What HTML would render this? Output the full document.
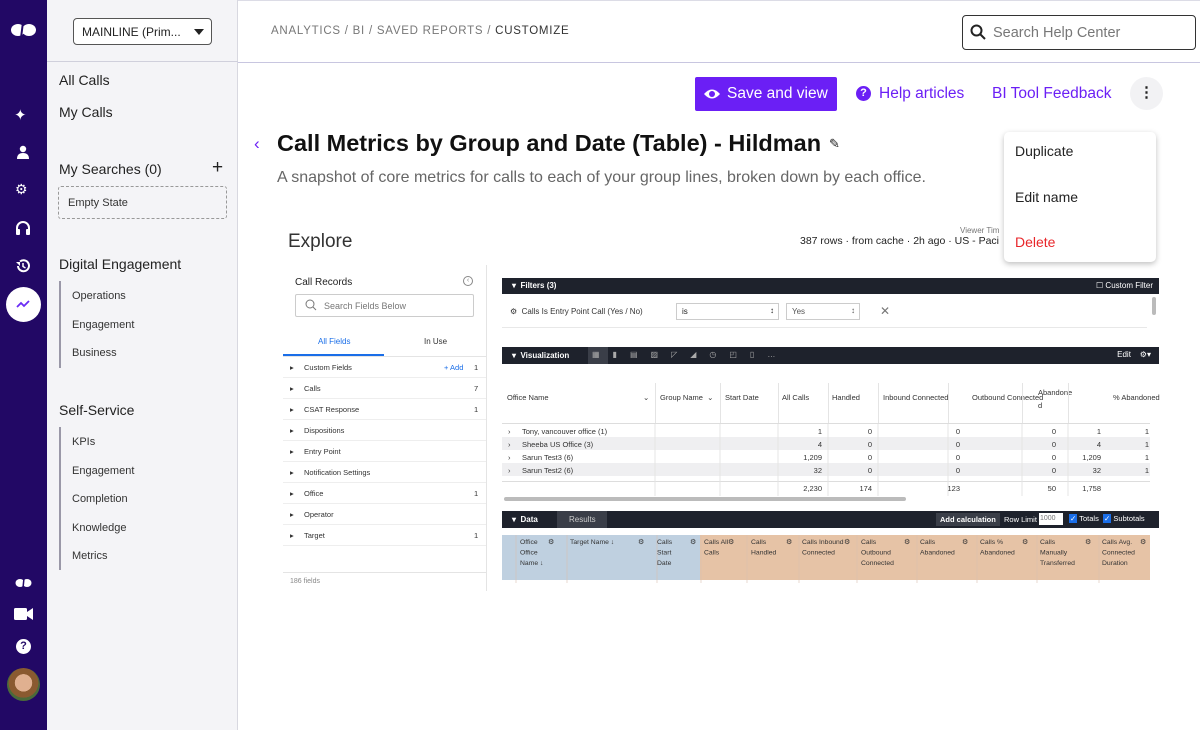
<!DOCTYPE html>
<html><head><meta charset="utf-8"><style>
*{margin:0;padding:0;box-sizing:border-box}
body{width:1200px;height:730px;overflow:hidden;font-family:"Liberation Sans",sans-serif;background:#fff;position:relative;color:#222}
.a{position:absolute;white-space:nowrap}
.nav{left:0;top:0;width:47px;height:730px;background:#220865}
.side{left:47px;top:0;width:191px;height:730px;background:#f4f4f7;border-right:1px solid #d8d8e0}
.dark{background:#1e222c;color:#fff;font-size:8px;font-weight:bold}
.fl{font-size:7.5px;color:#333}
.vc{font-size:7.5px;color:#333}
</style></head><body>
<div class="a nav"></div>
<svg class="a" style="left:10px;top:20px" width="28" height="20" viewBox="0 0 28 20"><ellipse cx="8" cy="10" rx="7" ry="6" fill="#fff"/><ellipse cx="19" cy="10" rx="7" ry="6" fill="#fff"/><path d="M13 2 L11 18" stroke="#220865" stroke-width="2"/></svg>
<div class="a" style="left:14px;top:106px;color:#fff;font-size:15px">✦</div>
<svg class="a" style="left:16px;top:145px" width="14" height="14"><circle cx="7" cy="4" r="3.2" fill="#fff"/><path d="M1 14 Q1 8 7 8 Q13 8 13 14Z" fill="#fff"/></svg>
<div class="a" style="left:15px;top:181px;color:#fff;font-size:14px">⚙</div>
<svg class="a" style="left:15px;top:220px" width="16" height="16"><path d="M2 10 V8 A6 6 0 0 1 14 8 V10" stroke="#fff" stroke-width="2" fill="none"/><rect x="1" y="9" width="4" height="6" rx="1" fill="#fff"/><rect x="11" y="9" width="4" height="6" rx="1" fill="#fff"/></svg>
<svg class="a" style="left:15px;top:258px" width="16" height="16"><path d="M3 8 A5.5 5.5 0 1 0 5 3.5" stroke="#fff" stroke-width="2" fill="none"/><path d="M1 4 L5 4 L5 8" fill="#fff"/><path d="M8 5 V8.5 L10.5 10" stroke="#fff" stroke-width="1.5" fill="none"/></svg>
<div class="a" style="left:6px;top:287px;width:35px;height:35px;border-radius:50%;background:#fff"></div>
<svg class="a" style="left:16px;top:298px" width="15" height="12"><path d="M1 9 L5 5 L8 8 L13 3" stroke="#6a2cf5" stroke-width="1.8" fill="none"/></svg>
<svg class="a" style="left:15px;top:577px" width="18" height="12"><ellipse cx="5" cy="6" rx="4.5" ry="4" fill="#fff"/><ellipse cx="12" cy="6" rx="4.5" ry="4" fill="#fff"/><path d="M9 1 L8 11" stroke="#220865" stroke-width="1.5"/></svg>
<svg class="a" style="left:14px;top:607px" width="20" height="14"><rect x="0" y="1" width="13" height="12" rx="1.5" fill="#fff"/><path d="M13 5 L19 1 V13 L13 9Z" fill="#fff"/></svg>
<div class="a" style="left:16px;top:639px;width:15px;height:15px;border-radius:50%;background:#fff;color:#220865;font-size:11px;font-weight:bold;text-align:center;line-height:15px">?</div>
<div class="a" style="left:7px;top:668px;width:33px;height:33px;border-radius:50%;background:radial-gradient(circle at 50% 45%,#e0b090 0 35%,#8a5a30 36% 60%,#4a6a3a 61%)"></div>

<div class="a side"></div>
<div class="a" style="left:47px;top:61px;width:191px;border-top:1px solid #d0d0dc"></div>
<div class="a" style="left:73px;top:18px;width:139px;height:27px;border:1px solid #555;border-radius:4px;background:#fff;font-size:12px;padding:6px 0 0 8px;color:#222">MAINLINE (Prim...</div>
<div class="a" style="left:194px;top:29px;border:5px solid transparent;border-top:6px solid #222"></div>
<div class="a" style="left:59px;top:72px;font-size:14px">All Calls</div>
<div class="a" style="left:59px;top:104px;font-size:14px">My Calls</div>
<div class="a" style="left:59px;top:161px;font-size:14px">My Searches (0)</div>
<div class="a" style="left:212px;top:157px;font-size:19px">+</div>
<div class="a" style="left:58px;top:186px;width:169px;height:33px;border:1px dashed #999;border-radius:3px;font-size:11px;padding:10px 0 0 9px;color:#333">Empty State</div>
<div class="a" style="left:59px;top:256px;font-size:14px">Digital Engagement</div>
<div class="a" style="left:59px;top:281px;height:87px;border-left:2px solid #9a98a8"></div>
<div class="a" style="left:72px;top:290px;font-size:11px;color:#333">Operations</div>
<div class="a" style="left:72px;top:319px;font-size:11px;color:#333">Engagement</div>
<div class="a" style="left:72px;top:347px;font-size:11px;color:#333">Business</div>
<div class="a" style="left:59px;top:402px;font-size:14px">Self-Service</div>
<div class="a" style="left:59px;top:427px;height:143px;border-left:2px solid #9a98a8"></div>
<div class="a" style="left:72px;top:436px;font-size:11px;color:#333">KPIs</div>
<div class="a" style="left:72px;top:465px;font-size:11px;color:#333">Engagement</div>
<div class="a" style="left:72px;top:493px;font-size:11px;color:#333">Completion</div>
<div class="a" style="left:72px;top:522px;font-size:11px;color:#333">Knowledge</div>
<div class="a" style="left:72px;top:550px;font-size:11px;color:#333">Metrics</div>

<div class="a" style="left:238px;top:0;width:962px;height:1px;background:#dcdce6"></div>
<div class="a" style="left:238px;top:62px;width:962px;height:1px;background:#c8c6e0"></div>
<div class="a" style="left:271px;top:25px;font-size:11.5px;letter-spacing:0.75px;color:#777">ANALYTICS / BI / SAVED REPORTS / <span style="color:#333">CUSTOMIZE</span></div>
<div class="a" style="left:962px;top:15px;width:234px;height:35px;border:1px solid #333;border-radius:4px;font-size:14.5px;color:#777;padding:9px 0 0 30px">Search Help Center</div>
<svg class="a" style="left:970px;top:24px" width="16" height="16"><circle cx="6.5" cy="6.5" r="5" stroke="#222" stroke-width="2" fill="none"/><path d="M10 10 L15 15" stroke="#222" stroke-width="2"/></svg>

<div class="a" style="left:695px;top:77px;width:142px;height:34px;background:#6b1ff5;border-radius:2px;color:#fff;font-size:15.5px;padding:8px 0 0 32px">Save and view</div>
<svg class="a" style="left:703px;top:87px" width="18" height="14"><path d="M1 7 Q9 -2 17 7 Q9 16 1 7Z" fill="#fff"/><circle cx="9" cy="7" r="3" fill="#6b1ff5"/></svg>
<div class="a" style="left:856px;top:86px;width:15px;height:15px;border-radius:50%;background:#6b1ff5;color:#fff;font-size:11px;font-weight:bold;text-align:center;line-height:15px">?</div>
<div class="a" style="left:879px;top:85px;font-size:15.5px;color:#6b1ff5">Help articles</div>
<div class="a" style="left:992px;top:85px;font-size:15.5px;color:#6b1ff5">BI Tool Feedback</div>
<div class="a" style="left:1130px;top:77px;width:33px;height:33px;border-radius:50%;background:#f2f2f4;text-align:center;font-size:15px;font-weight:bold;line-height:31px">⋮</div>

<div class="a" style="left:254px;top:134px;font-size:17px;color:#6b1ff5">‹</div>
<div class="a" style="left:277px;top:130px;font-size:23.5px;font-weight:bold;color:#111">Call Metrics by Group and Date (Table) - Hildman</div>
<div class="a" style="left:829px;top:136px;font-size:13px">✎</div>
<div class="a" style="left:277px;top:169px;font-size:16px;color:#666">A snapshot of core metrics for calls to each of your group lines, broken down by each office.</div>

<div class="a" style="left:288px;top:231px;font-size:19px;color:#333">Explore</div>
<div class="a" style="left:960px;top:226px;font-size:8px;color:#777">Viewer Tim</div>
<div class="a" style="left:800px;top:235px;font-size:10.5px;color:#222">387 rows · from cache · 2h ago · US - Paci</div>
<div class="a" style="left:486px;top:265px;width:1px;height:326px;background:#e4e4e4"></div>
<div class="a" style="left:295px;top:277px;font-size:10px;color:#222">Call Records</div>
<div class="a" style="left:463px;top:276px;width:10px;height:10px;border:1px solid #888;border-radius:50%;font-size:7px;line-height:8px;text-align:center;color:#888">‹</div>
<div class="a" style="left:295px;top:294px;width:179px;height:23px;border:1px solid #ccc;border-radius:2px;font-size:9px;color:#777;padding:6px 0 0 28px">Search Fields Below</div>
<svg class="a" style="left:305px;top:299px" width="12" height="12"><circle cx="5" cy="5" r="4" stroke="#777" fill="none"/><path d="M8 8 L11 11" stroke="#777"/></svg>
<div class="a" style="left:318px;top:337px;font-size:8px;color:#1a6ee8">All Fields</div>
<div class="a" style="left:424px;top:337px;font-size:8px;color:#333">In Use</div>
<div class="a" style="left:283px;top:354px;width:101px;height:2px;background:#1a6ee8"></div>
<div class="a" style="left:283px;top:356px;width:203px;height:1px;background:#e4e4e4"></div>
<div class="a" style="left:283px;top:357px;width:203px">
<div style="position:relative;height:21px;border-bottom:1px solid #eee" class="fl"><span class="a" style="left:7px;top:6px">▸</span><span class="a" style="left:21px;top:6px">Custom Fields</span><span class="a" style="left:161px;top:6px;color:#1a6ee8">+ Add</span><span class="a" style="left:191px;top:6px">1</span></div>
<div style="position:relative;height:21px;border-bottom:1px solid #eee" class="fl"><span class="a" style="left:7px;top:6px">▸</span><span class="a" style="left:21px;top:6px">Calls</span><span class="a" style="left:191px;top:6px">7</span></div>
<div style="position:relative;height:21px;border-bottom:1px solid #eee" class="fl"><span class="a" style="left:7px;top:6px">▸</span><span class="a" style="left:21px;top:6px">CSAT Response</span><span class="a" style="left:191px;top:6px">1</span></div>
<div style="position:relative;height:21px;border-bottom:1px solid #eee" class="fl"><span class="a" style="left:7px;top:6px">▸</span><span class="a" style="left:21px;top:6px">Dispositions</span></div>
<div style="position:relative;height:21px;border-bottom:1px solid #eee" class="fl"><span class="a" style="left:7px;top:6px">▸</span><span class="a" style="left:21px;top:6px">Entry Point</span></div>
<div style="position:relative;height:21px;border-bottom:1px solid #eee" class="fl"><span class="a" style="left:7px;top:6px">▸</span><span class="a" style="left:21px;top:6px">Notification Settings</span></div>
<div style="position:relative;height:21px;border-bottom:1px solid #eee" class="fl"><span class="a" style="left:7px;top:6px">▸</span><span class="a" style="left:21px;top:6px">Office</span><span class="a" style="left:191px;top:6px">1</span></div>
<div style="position:relative;height:21px;border-bottom:1px solid #eee" class="fl"><span class="a" style="left:7px;top:6px">▸</span><span class="a" style="left:21px;top:6px">Operator</span></div>
<div style="position:relative;height:21px;border-bottom:1px solid #eee" class="fl"><span class="a" style="left:7px;top:6px">▸</span><span class="a" style="left:21px;top:6px">Target</span><span class="a" style="left:191px;top:6px">1</span></div>
</div>
<div class="a" style="left:283px;top:572px;width:203px;height:1px;background:#e4e4e4"></div>
<div class="a" style="left:290px;top:578px;font-size:7px;color:#888">186 fields</div>

<div class="a dark" style="left:502px;top:278px;width:657px;height:16px;padding:3px 0 0 10px">▾ &nbsp;Filters (3)<span style="position:absolute;right:6px;top:3px;font-weight:normal">☐ Custom Filter</span></div>
<div class="a" style="left:510px;top:307px;font-size:8px;color:#333">⚙ &nbsp;Calls Is Entry Point Call (Yes / No)</div>
<div class="a" style="left:676px;top:303px;width:103px;height:17px;border:1px solid #ccc;font-size:8px;padding:3px 0 0 5px">is<span style="position:absolute;right:4px;top:2px">↕</span></div>
<div class="a" style="left:786px;top:303px;width:74px;height:17px;border:1px solid #ccc;font-size:8px;padding:3px 0 0 5px;color:#555">Yes<span style="position:absolute;right:4px;top:2px">↕</span></div>
<div class="a" style="left:880px;top:304px;font-size:12px;color:#777">✕</div>
<div class="a" style="left:502px;top:327px;width:645px;height:1px;background:#e8e8e8"></div>
<div class="a" style="left:1152px;top:297px;width:4px;height:18px;background:#bbb;border-radius:2px"></div>

<div class="a dark" style="left:502px;top:347px;width:657px;height:17px;padding:4px 0 0 10px">▾ &nbsp;Visualization<span style="position:absolute;left:86px;top:0;width:20px;height:17px;background:#3a3e48"></span><span style="position:absolute;left:90px;top:3px;font-weight:normal;color:#aaa;letter-spacing:13px">▦▮▤▨◸◢◷◰▯…</span><span style="position:absolute;right:8px;top:3px;font-weight:normal">Edit &nbsp;&nbsp;&nbsp;⚙▾</span></div>
<div class="a" style="left:502px;top:383px;width:658px;height:40px">
<div class="a vc" style="left:5px;top:10px">Office Name</div><div class="a vc" style="left:141px;top:10px">⌄</div>
<div class="a" style="left:153px;top:0;width:1px;height:40px;background:#e4e4e4"></div>
<div class="a vc" style="left:158px;top:10px">Group Name &nbsp;⌄</div>
<div class="a" style="left:218px;top:0;width:1px;height:40px;background:#e4e4e4"></div>
<div class="a vc" style="left:223px;top:10px">Start Date</div>
<div class="a" style="left:276px;top:0;width:1px;height:40px;background:#e4e4e4"></div>
<div class="a vc" style="left:280px;top:10px">All Calls</div>
<div class="a" style="left:326px;top:0;width:1px;height:40px;background:#e4e4e4"></div>
<div class="a vc" style="left:330px;top:10px">Handled</div>
<div class="a" style="left:376px;top:0;width:1px;height:40px;background:#e4e4e4"></div>
<div class="a vc" style="left:381px;top:10px">Inbound Connected</div>
<div class="a" style="left:446px;top:0;width:1px;height:40px;background:#e4e4e4"></div>
<div class="a vc" style="left:470px;top:10px">Outbound Connected</div>
<div class="a" style="left:520px;top:0;width:1px;height:40px;background:#e4e4e4"></div>
<div class="a vc" style="left:536px;top:3px;line-height:13px">Abandone<br>d</div>
<div class="a" style="left:566px;top:0;width:1px;height:40px;background:#e4e4e4"></div>
<div class="a vc" style="left:611px;top:10px">% Abandoned</div>
</div>
<div class="a" style="left:502px;top:423px;width:648px;height:1px;background:#ddd"></div>
<div class="a" style="left:502px;top:437px;width:648px;height:13px;background:#efeff1"></div>
<div class="a" style="left:502px;top:463px;width:648px;height:13px;background:#efeff1"></div>
<div class="a" style="left:502px;top:481px;width:648px;height:1px;background:#ddd"></div>
<svg class="a" style="left:502px;top:424px" width="660" height="72" font-family="Liberation Sans" font-size="7.5" fill="#333">
<g stroke="#e4e4e4"><line x1="153" y1="0" x2="153" y2="72"/><line x1="218" y1="0" x2="218" y2="72"/><line x1="276" y1="0" x2="276" y2="72"/><line x1="326" y1="0" x2="326" y2="72"/><line x1="376" y1="0" x2="376" y2="72"/><line x1="446" y1="0" x2="446" y2="72"/><line x1="520" y1="0" x2="520" y2="72"/><line x1="566" y1="0" x2="566" y2="72"/></g>
<g><text x="6" y="10">›</text><text x="20" y="10">Tony, vancouver office   (1)</text>
<text x="6" y="23">›</text><text x="20" y="23">Sheeba US Office   (3)</text>
<text x="6" y="36">›</text><text x="20" y="36">Sarun Test3   (6)</text>
<text x="6" y="49">›</text><text x="20" y="49">Sarun Test2   (6)</text></g>
<g text-anchor="end">
<text x="320" y="10">1</text><text x="370" y="10">0</text><text x="458" y="10">0</text><text x="554" y="10">0</text><text x="599" y="10">1</text><text x="647" y="10">1</text>
<text x="320" y="23">4</text><text x="370" y="23">0</text><text x="458" y="23">0</text><text x="554" y="23">0</text><text x="599" y="23">4</text><text x="647" y="23">1</text>
<text x="320" y="36">1,209</text><text x="370" y="36">0</text><text x="458" y="36">0</text><text x="554" y="36">0</text><text x="599" y="36">1,209</text><text x="647" y="36">1</text>
<text x="320" y="49">32</text><text x="370" y="49">0</text><text x="458" y="49">0</text><text x="554" y="49">0</text><text x="599" y="49">32</text><text x="647" y="49">1</text>
<text x="320" y="67">2,230</text><text x="370" y="67">174</text><text x="458" y="67">123</text><text x="554" y="67">50</text><text x="599" y="67">1,758</text>
</g></svg>
<div class="a" style="left:504px;top:497px;width:402px;height:4px;background:#bbb;border-radius:2px"></div>

<div class="a dark" style="left:502px;top:511px;width:657px;height:17px;padding:4px 0 0 10px">▾ &nbsp;Data<span style="position:absolute;left:55px;top:0;width:50px;height:17px;background:#3a3e48;font-weight:normal;color:#ccc;padding:4px 0 0 12px">Results</span>
<span style="position:absolute;left:434px;top:2px;height:13px;background:#3a3e48;padding:2px 4px;font-size:7.5px">Add calculation</span>
<span style="position:absolute;left:502px;top:4px;font-weight:normal;font-size:7.5px">Row Limit</span>
<span style="position:absolute;left:537px;top:2px;width:24px;height:12px;background:#fff;color:#777;font-weight:normal;font-size:7px;padding:2px 1px">1000</span>
<span style="position:absolute;left:567px;top:3px;font-weight:normal;font-size:7.5px"><span style="background:#1a6ee8;padding:0 1px">✓</span> Totals &nbsp;<span style="background:#1a6ee8;padding:0 1px">✓</span> Subtotals</span></div>
<div class="a" style="left:502px;top:535px;width:198px;height:45px;background:#bfd0e0"></div>
<div class="a" style="left:700px;top:535px;width:450px;height:45px;background:#e6c3a6"></div>
<svg class="a" style="left:502px;top:535px" width="660" height="48" font-family="Liberation Sans" font-size="6.8" fill="#333">
<g stroke="#d8c0b0" stroke-width="0.6"><line x1="14" y1="0" x2="14" y2="48"/><line x1="65" y1="0" x2="65" y2="48"/><line x1="155" y1="0" x2="155" y2="48"/><line x1="199" y1="0" x2="199" y2="48"/><line x1="245" y1="0" x2="245" y2="48"/><line x1="297" y1="0" x2="297" y2="48"/><line x1="355" y1="0" x2="355" y2="48"/><line x1="415" y1="0" x2="415" y2="48"/><line x1="475" y1="0" x2="475" y2="48"/><line x1="535" y1="0" x2="535" y2="48"/><line x1="597" y1="0" x2="597" y2="48"/></g>
<text x="18" y="9">Office</text><text x="18" y="19.5">Office</text><text x="18" y="30">Name ↓</text><text x="46" y="9">⚙</text>
<text x="68" y="9">Target Name ↓</text><text x="136" y="9">⚙</text>
<text x="155" y="9">Calls</text><text x="155" y="19.5">Start</text><text x="155" y="30">Date</text><text x="188" y="9">⚙</text>
<text x="202" y="9">Calls All</text><text x="202" y="19.5">Calls</text><text x="226" y="9">⚙</text>
<text x="249" y="9">Calls</text><text x="249" y="19.5">Handled</text><text x="284" y="9">⚙</text>
<text x="300" y="9">Calls Inbound</text><text x="300" y="19.5">Connected</text><text x="342" y="9">⚙</text>
<text x="359" y="9">Calls</text><text x="359" y="19.5">Outbound</text><text x="359" y="30">Connected</text><text x="402" y="9">⚙</text>
<text x="418" y="9">Calls</text><text x="418" y="19.5">Abandoned</text><text x="460" y="9">⚙</text>
<text x="478" y="9">Calls %</text><text x="478" y="19.5">Abandoned</text><text x="520" y="9">⚙</text>
<text x="538" y="9">Calls</text><text x="538" y="19.5">Manually</text><text x="538" y="30">Transferred</text><text x="583" y="9">⚙</text>
<text x="600" y="9">Calls Avg.</text><text x="600" y="19.5">Connected</text><text x="600" y="30">Duration</text><text x="638" y="9">⚙</text>
</svg>

<div class="a" style="left:1004px;top:132px;width:152px;height:130px;background:#fff;border-radius:5px;box-shadow:0 2px 6px rgba(0,0,0,.25)"></div>
<div class="a" style="left:1015px;top:143px;font-size:14px;color:#222">Duplicate</div>
<div class="a" style="left:1015px;top:189px;font-size:14px;color:#222">Edit name</div>
<div class="a" style="left:1015px;top:234px;font-size:14px;color:#e8262a">Delete</div>
</body></html>
